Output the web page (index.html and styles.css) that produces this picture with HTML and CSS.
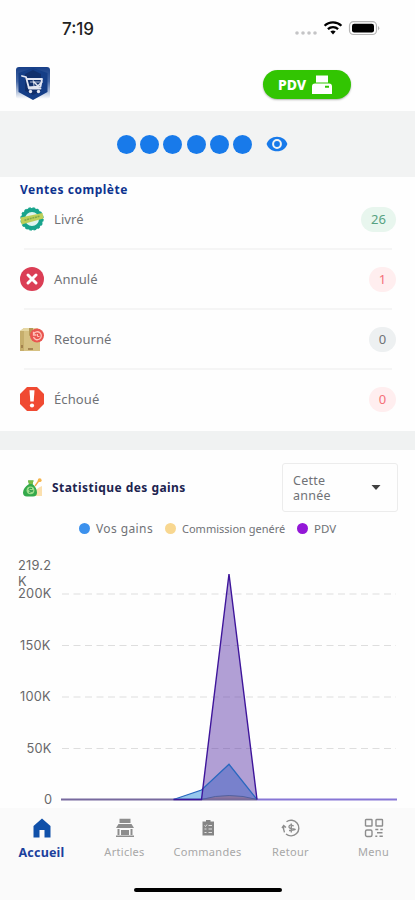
FILE: index.html
```html
<!DOCTYPE html>
<html lang="fr">
<head>
    <meta charset="UTF-8">
    <meta name="viewport" content="width=device-width, initial-scale=1.0">
    <title>Accueil</title>
    <link rel="stylesheet" href="styles.css">
</head>
<body>

<div class="status-bar">
    <div class="time">7:19</div>
    <svg class="status-icons" width="90" height="20" viewBox="0 0 90 20">
        <g fill="#c4c4c6">
            <circle cx="7" cy="14" r="1.8"/><circle cx="13" cy="14" r="1.8"/><circle cx="19" cy="14" r="1.8"/><circle cx="25" cy="14" r="1.8"/>
        </g>
        <g fill="none" stroke="#000" stroke-width="2.3">
            <path d="M34.6 6.8a12 12 0 0 1 16.8 0"/>
            <path d="M37.9 10.2a7.5 7.5 0 0 1 10.2 0"/>
        </g>
        <path d="M40.4 12.6a4 4 0 0 1 5.2 0L43 15.4z" fill="#000"/>
        <rect x="59.5" y="2.7" width="27" height="12.8" rx="4" fill="none" stroke="#b5b5b5" stroke-width="1.2"/>
        <rect x="62" y="4.8" width="22" height="8.6" rx="2.2" fill="#000"/>
        <path d="M88 7q2.6 2.2 0 4.4z" fill="#b5b5b5"/>
    </svg>
</div>

<div class="header">
    <svg width="34" height="34" viewBox="0 0 34 34">
        <defs>
            <linearGradient id="logoFade" x1="0" y1="0" x2="0" y2="1">
                <stop offset="0" stop-color="#173f88"/>
                <stop offset=".45" stop-color="#4668a5"/>
                <stop offset="1" stop-color="#fff"/>
            </linearGradient>
        </defs>
        <rect x="0" y="0" width="34" height="32" rx="3" fill="url(#logoFade)"/>
        <path d="M2.5 6L17 1l14.5 5v19L17 33 2.5 25z" fill="#153e87"/>
        <path d="M9 7l8-4 8 4v17l-8 4-8-4z" fill="#102f6c"/>
        <g fill="none" stroke="#e3e6f2" stroke-width="1.8" stroke-linecap="round" stroke-linejoin="round">
            <path d="M6 9l4 1 3 11.5h11.5M10.5 12H26l-1.5 7.5-12 1"/>
            <path d="M14.5 15h9M17 12l1 7" stroke-width=".8"/>
            <path d="M19.5 21l6.5-6M18 15l3 3" stroke-width="1.5"/>
        </g>
        <circle cx="14.5" cy="24.5" r="1.7" fill="#e3e6f2"/><circle cx="22.5" cy="24.5" r="1.7" fill="#e3e6f2"/>
    </svg>
    <div class="pdv-button">
        <span>PDV</span>
        <svg width="20" height="20" viewBox="0 0 20 20" fill="#fff">
            <path d="M4 .5h12v7H4z"/>
            <path fill-rule="evenodd" d="M3 8.5h14q3 0 3 3V19H0v-7.5q0-3 3-3zM13 10.8v1.9h4v-1.9z"/>
        </svg>
    </div>
</div>

<div class="balance">
    <div class="dots">
        <i></i><i></i><i></i><i></i><i></i><i></i>
    </div>
    <svg width="22" height="16" viewBox="0 0 22 16">
        <path d="M11 .7C6 .7 2 3.6.6 8 2 12.4 6 15.3 11 15.3S20 12.4 21.4 8C20 3.6 16 .7 11 .7z" fill="#187aea"/>
        <circle cx="11" cy="8" r="3.9" fill="#187aea" stroke="#f2f3f3" stroke-width="2"/>
    </svg>
</div>

<div class="sales">
    <h2>Ventes complète</h2>
    <div class="sale-row">
        <svg width="24" height="24" viewBox="0 0 24 24">
            <circle cx="12" cy="12" r="9" fill="#dff4ef" stroke="#18a48c" stroke-width="4"/>
            <circle cx="12" cy="12" r="10.9" fill="none" stroke="#18a48c" stroke-width="1.6" stroke-dasharray="2.5 1.8"/>
            <path d="M.5 10.5L22.5 6l1 5.5-22 6z" fill="#bdcf59"/>
            <path d="M4.5 13.2l15-4" stroke="#7fa94a" stroke-width="1.5" stroke-dasharray="2 .7"/>
        </svg>
        <span class="label">Livré</span>
        <span class="badge green">26</span>
    </div>
    <div class="sale-row">
        <svg width="24" height="24" viewBox="0 0 24 24">
            <circle cx="12" cy="12" r="12" fill="#db3e55"/>
            <path d="M8 8l8 8M16 8l-8 8" stroke="#fff" stroke-width="3" stroke-linecap="round"/>
        </svg>
        <span class="label">Annulé</span>
        <span class="badge red">1</span>
    </div>
    <div class="sale-row">
        <svg width="24" height="24" viewBox="0 0 24 24">
            <path d="M0 4l4-3h13l3 3v20H0z" fill="#d6c183"/>
            <path d="M0 4l4-3h13l3 3z" fill="#e5d7a4"/>
            <path d="M0 4h4v20H0z" fill="#c6ae6c"/>
            <path d="M9 1h4v8l-2-1-2 1z" fill="#b69a59"/>
            <path d="M2 18v3M8 22h5" stroke="#987443" stroke-width="1.5"/>
            <circle cx="17" cy="8.5" r="7" fill="#e95650"/>
            <path d="M13.7 7a4 4 0 1 1-.2 3M13.5 4.8V8h3" fill="none" stroke="#ffc1b9" stroke-width="1.3"/>
            <path d="M17.5 7v2.5h2" fill="none" stroke="#ffc1b9" stroke-width="1"/>
        </svg>
        <span class="label">Retourné</span>
        <span class="badge grey">0</span>
    </div>
    <div class="sale-row">
        <svg width="24" height="24" viewBox="0 0 24 24">
            <path d="M7 0h10l7 7v10l-7 7H7l-7-7V7z" fill="#f04a32"/>
            <path d="M9.5 3.2h5l-.8 11.3h-3.4z" fill="#fff"/>
            <circle cx="12" cy="18.5" r="2.1" fill="#fff"/>
        </svg>
        <span class="label">Échoué</span>
        <span class="badge red">0</span>
    </div>
</div>

<div class="stats">
    <div class="stats-head">
        <svg width="20" height="20" viewBox="0 0 20 20">
            <path d="M11 18q1-8 8-10v10z" fill="#fbe0ae"/>
            <path d="M5 2.5h5.5L9.5 6q4.5 4 4.5 8.5 0 4-4 4H4q-4 0-4-4Q0 10 6 6z" fill="#34a94b"/>
            <path d="M5 2.5h5.5L9.5 6H6z" fill="#79bd43"/>
            <circle cx="7.5" cy="12.3" r="3.9" fill="#9ddd8b"/>
            <path d="M9 10.5q-3-1-3 .8t3 1.5-3 1.6" fill="none" stroke="#249344"/>
            <path d="M12 8l4-5.5" stroke="#f2aa43" stroke-width="1.3"/>
            <circle cx="16.7" cy="2.2" r="1.9" fill="#f5b44b"/>
        </svg>
        <h3>Statistique des gains</h3>
        <div class="select">
            <span>Cette<br>année</span>
            <svg width="10" height="5" viewBox="0 0 10 5"><path d="M.5 0h9L5 5z" fill="#404040"/></svg>
        </div>
    </div>
    <div class="legend">
        <i class="blue"></i><span class="legend-gains">Vos gains</span>
        <i class="beige"></i><span class="legend-commission">Commission genéré</span>
        <i class="purple"></i><span class="legend-pdv">PDV</span>
    </div>
    <svg class="chart" width="415" height="258" viewBox="0 550 415 258">
        <g class="axis">
            <text x="18" y="570">219.2</text>
            <text x="18" y="586">K</text>
            <text x="18" y="598">200K</text>
            <text x="20" y="649.5">150K</text>
            <text x="20" y="701">100K</text>
            <text x="26.5" y="752.5">50K</text>
            <text x="44" y="804">0</text>
        </g>
        <path class="grid" d="M62 594H396M62 645.5H396M62 697H396M62 748.5H396"/>
        <path d="M61 799.5H257" stroke="#77699e" stroke-width="1.8"/>
        <path d="M257 799.5H397" stroke="#8776d5" stroke-width="1.8"/>
        <path d="M173.5 799.5L201.5 790 229 764.3 257 799.5z" fill="#258bdc" fill-opacity=".48"/>
        <path d="M201.5 799.5Q229 791.5 257 799.5z" fill="#c7a26a" fill-opacity=".6"/>
        <path d="M201.5 799.5L229 574 257 799.5z" fill="#552da4" fill-opacity=".45"/>
        <path d="M173.5 799.5L201.5 790 229 764.3 257 799.5" fill="none" stroke="#2968bf" stroke-width="1.3"/>
        <path d="M201.5 799.5Q229 791.5 257 799.5" fill="none" stroke="#5261a0" stroke-width="1"/>
        <path d="M173.5 799.5H201.5L229 574 257 799.5" fill="none" stroke="#3e159b" stroke-width="1.4"/>
    </svg>
</div>

<div class="nav">
    <div class="tab active">
        <svg width="20" height="20" viewBox="0 0 20 20"><path d="M10 .5L18.5 8v11.5h-6V12h-5v7.5h-6V8z" fill="#1050a9"/></svg>
        <span>Accueil</span>
    </div>
    <div class="tab">
        <svg width="20" height="20" viewBox="0 0 20 20" fill="#8d8d8d">
            <path d="M4.500.8h11V5h-11zM3.5 6h13L19 10H1z"/>
            <path d="M2.5 11h2v6h-2zM15.5 11h2v6h-2zM6 12h8v5H6zM1 17.5h18V19H1z"/>
        </svg>
        <span>Articles</span>
    </div>
    <div class="tab">
        <svg width="20" height="20" viewBox="0 0 20 20">
            <path d="M4.5 3.500H8V2h4.500v1.500H16V17.500H4.500z" fill="#858585"/>
            <path d="M6.500 7.500l1 1 1.500-2M10.500 7.500H14M6.500 11h2M10.500 11H14M6.500 14.500h2M10.500 14.500H14" fill="none" stroke="#e0e0e0" stroke-width="1"/>
        </svg>
        <span>Commandes</span>
    </div>
    <div class="tab">
        <svg width="20" height="20" viewBox="0 0 20 20" fill="none" stroke="#8d8d8d" stroke-width="1.4">
            <path d="M5.500 3.700A7.800 7.800 0 1 1 5 16M3.500 14.300A7.800 7.800 0 0 1 2.700 8.500M1 10l1.700-2.500L5 9.500"/>
            <path d="M12.800 8Q8.500 6 8 8.300t4.500 2.700-4.500 1.500M10.300 5.500v9" stroke-width="1.300"/>
        </svg>
        <span>Retour</span>
    </div>
    <div class="tab">
        <svg width="20" height="20" viewBox="0 0 20 20" fill="none" stroke="#8d8d8d" stroke-width="1.4">
            <rect x="1.5" y="1.5" width="6.5" height="6.5" rx=".6"/>
            <rect x="12" y="1.5" width="6.5" height="6.5" rx=".6"/>
            <rect x="1.5" y="12" width="6.5" height="6.5" rx="1.5"/>
            <path d="M11.3 11.5h3M13 14.8h5.500M16.300 11.500h2.500M11.300 18.300h2M15.500 18.300h3.300"/>
        </svg>
        <span>Menu</span>
    </div>
    <div class="home-indicator"></div>
</div>

</body>
</html>
```
FILE: styles.css
```css
* {
    box-sizing: border-box;
}
body {
    font-family: "Noto Sans", sans-serif;
    background-color: #fefefe;
    color: #707276;
    margin: 0;
    height: 900px;
    overflow: hidden;
}
svg {
    display: block;
    flex-shrink: 0;
}
.status-bar {
    height: 57px;
    padding: 19px 35px 0 62px;
    display: flex;
    justify-content: space-between;
}
.time {
    font-family: Inter, sans-serif;
    font-size: 17px;
    line-height: 20px;
    font-weight: 500;
    color: #222;
}
.header {
    height: 54px;
    padding: 10px 64px 0 16px;
    display: flex;
    justify-content: space-between;
    align-items: flex-start;
}
.pdv-button {
    width: 88px;
    height: 29px;
    margin-top: 3px;
    border-radius: 15px;
    background-color: #32c502;
    box-shadow: 0 1px 2px rgba(0, 0, 0, 0.3);
    display: flex;
    align-items: center;
    padding-left: 15px;
    gap: 5px;
    color: #fff;
    font-size: 14px;
    font-weight: 800;
}
.pdv-button span {
    width: 29px;
    letter-spacing: -0.1px;
}
.balance {
    height: 66px;
    background-color: #f2f3f3;
    display: flex;
    align-items: center;
    padding-left: 117px;
    gap: 14px;
}
.dots {
    display: flex;
    gap: 4.2px;
}
.dots i {
    width: 19px;
    height: 19px;
    border-radius: 50%;
    background-color: #187aea;
}
.sales {
    height: 254px;
    padding: 4px 19px 0 20px;
}
.sales h2 {
    height: 18px;
    margin: 0 0 -9px;
    font-size: 12px;
    line-height: 18px;
    font-weight: 700;
    letter-spacing: 0.52px;
    color: #0d338f;
}
.sale-row {
    height: 60px;
    padding-bottom: 2px;
    display: flex;
    align-items: center;
    background: linear-gradient(#f5f5f5, #f5f5f5) 4px 100% / 368px 2px no-repeat;
}
.sale-row:last-child {
    background: none;
}
.label {
    flex: 1;
    margin-left: 10px;
    font-size: 13px;
    letter-spacing: 0.1px;
}
.badge {
    min-width: 27px;
    height: 25px;
    padding: 0 9px;
    border-radius: 13px;
    font-size: 13px;
    line-height: 25px;
    text-align: center;
}
.green {
    min-width: 35px;
    background-color: #e8f6ee;
    color: #57a181;
}
.red {
    background-color: #ffeeef;
    color: #f57078;
}
.grey {
    background-color: #edf0f1;
}
.stats {
    height: 377px;
    border-top: 19px solid #f0f2f2;
}
.stats-head {
    height: 62px;
    padding: 13px 17px 0 23px;
    display: flex;
    align-items: center;
}
.stats-head h3 {
    flex: 1;
    margin: 0 0 0 9px;
    font-size: 12px;
    font-weight: 700;
    letter-spacing: 0.45px;
    color: #20234f;
}
.select {
    width: 116px;
    height: 49px;
    border: 1px solid #ececec;
    border-radius: 3px;
    padding: 0 16px 0 10px;
    display: flex;
    align-items: center;
    justify-content: space-between;
    font-size: 12.5px;
    line-height: 15px;
    letter-spacing: 0.25px;
}
.legend {
    height: 38px;
    padding: 0 0 5px 79px;
    display: flex;
    align-items: center;
    font-size: 12px;
}
.legend i {
    width: 11px;
    height: 11px;
    margin-right: 6px;
    border-radius: 50%;
}
.blue {
    background-color: #3c91ed;
}
.beige {
    background-color: #f8d790;
}
.purple {
    background-color: #9317d7;
}
.legend-gains {
    width: 69px;
    letter-spacing: 0.4px;
}
.legend-commission {
    width: 115px;
    font-size: 11px;
    white-space: nowrap;
}
.legend-pdv {
    font-size: 11.5px;
}
.axis {
    font-family: Inter, sans-serif;
    font-size: 12.8px;
    letter-spacing: 0.25px;
    fill: #68686a;
}
.grid {
    stroke: #dedede;
    stroke-width: 1.2;
    stroke-dasharray: 7 4.5;
}
.nav {
    position: relative;
    height: 92px;
    padding-top: 10px;
    background-color: #fafafa;
    display: flex;
}
.tab {
    width: 83px;
    display: flex;
    flex-direction: column;
    align-items: center;
    font-size: 11px;
    line-height: 16px;
    letter-spacing: 0.3px;
    color: #a7a7a7;
}
.tab span {
    margin-top: 6px;
}
.tab.active {
    font-size: 12.5px;
    font-weight: 700;
    letter-spacing: 0.2px;
    color: #1b409c;
}
.tab.active span {
    margin-top: 7px;
}
.home-indicator {
    position: absolute;
    left: 134px;
    bottom: 8px;
    width: 148px;
    height: 4px;
    border-radius: 2px;
    background-color: #000;
}
```
